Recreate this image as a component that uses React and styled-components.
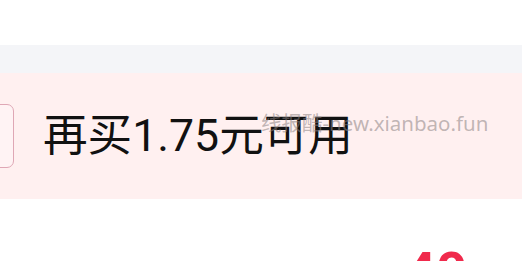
import React from 'react';
import styled, { createGlobalStyle } from 'styled-components';

const Global = createGlobalStyle`
  html, body {
    margin: 0;
    padding: 0;
    background: #ffffff;
    overflow: hidden;
  }
  body {
    font-family: Roboto, "Noto Sans CJK SC", sans-serif;
  }
`;

const Page = styled.div`
  width: 522px;
  height: 261px;
  display: flex;
  flex-direction: column;
  overflow: hidden;
`;

const TopSpace = styled.div`
  flex-shrink: 0;
  height: 45px;
  background: #ffffff;
`;

const Divider = styled.div`
  flex-shrink: 0;
  height: 28px;
  background: #f4f5f8;
`;

const Banner = styled.div`
  position: relative;
  flex-shrink: 0;
  height: 126px;
  background: #fff0f0;
  display: flex;
  align-items: center;
  gap: 29px;
`;

const Tag = styled.div`
  width: 60px;
  height: 62px;
  margin-left: -48px;
  border: 1px solid #dfa7b5;
  border-radius: 7px;
  background: #fff3f4;
`;

const Hint = styled.span`
  font-family: Roboto, "Noto Sans CJK SC", sans-serif;
  font-size: 44.6px;
  line-height: 1;
  color: #111111;
`;

const Watermark = styled.span`
  position: absolute;
  left: 261px;
  top: 40px;
  font-family: "Noto Sans", "Noto Sans CJK SC", sans-serif;
  font-size: 20.5px;
  line-height: 1;
  color: rgba(140, 130, 130, 0.55);
  white-space: nowrap;
  pointer-events: none;
`;

const PriceRow = styled.div`
  flex: 1;
  min-height: 0;
  display: flex;
  justify-content: flex-end;
  align-items: flex-start;
  padding-right: 55px;
  overflow: hidden;
`;

const Price = styled.span`
  margin-top: 46px;
  font-family: Roboto, sans-serif;
  font-weight: 700;
  font-size: 54px;
  line-height: 1;
  color: #f02a4c;
`;

export default function App() {
  return (
    <Page>
      <Global />
      <TopSpace />
      <Divider />
      <Banner>
        <Tag />
        <Hint>再买1.75元可用</Hint>
        <Watermark>线报酷-new.xianbao.fun</Watermark>
      </Banner>
      <PriceRow>
        <Price>40</Price>
      </PriceRow>
    </Page>
  );
}
